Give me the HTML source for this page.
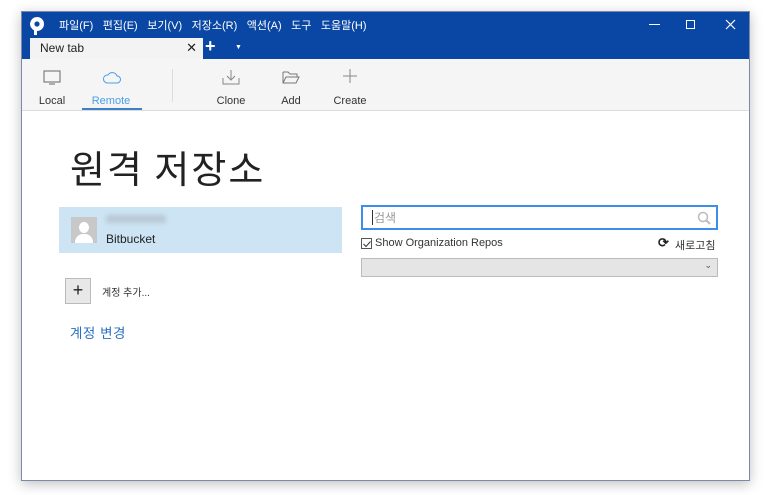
<!DOCTYPE html>
<html><head><meta charset="utf-8"><style>
*{margin:0;padding:0;box-sizing:border-box}
body{width:771px;height:495px;background:#fff;font-family:"Liberation Sans","Noto Sans CJK KR",sans-serif;position:relative;overflow:hidden}
.win{position:absolute;left:21px;top:11px;width:729px;height:470px;background:#fff;border:1px solid #7a8aa8;box-shadow:0 3px 12px rgba(0,0,0,.25)}
.title{position:absolute;left:0;top:0;width:727px;height:47px;background:#0a47a5}
.menu{position:absolute;top:5px;left:37px;color:#fff;font-size:11px;white-space:nowrap}
.menu span{margin-right:9.5px}
.tab{position:absolute;left:8px;top:26px;width:173px;height:21px;background:#f3f3f3;font-size:12px;color:#222;padding:3px 10px}
.ab{position:absolute;color:#fff}
.tool{position:absolute;top:47px;left:0;width:727px;height:52px;background:#f5f5f5;border-bottom:1px solid #ddd}
.ti{position:absolute;top:36px;font-size:11px;color:#333;text-align:center;width:60px}
.abs{position:absolute}
</style></head><body>
<div class="win">
<div class="title">
<svg class="abs" style="left:8px;top:5px" width="14" height="18" viewBox="0 0 14 18"><path d="M7 0a7 7 0 0 0-3 13.3V18h3v-4a7 7 0 0 0 0-14z" fill="#fff"/><circle cx="7" cy="7" r="2.6" fill="#0a47a5"/></svg>
<div class="menu"><span>파일(F)</span><span>편집(E)</span><span>보기(V)</span><span>저장소(R)</span><span>액션(A)</span><span>도구</span><span>도움말(H)</span></div>
<div class="abs" style="left:627px;top:12px;width:11px;height:1px;background:#fff"></div>
<div class="abs" style="left:664px;top:8px;width:9px;height:9px;border:1px solid #fff"></div>
<svg class="abs" style="left:703px;top:7px" width="11" height="11"><path d="M1 1l9 9M10 1l-9 9" stroke="#fff" stroke-width="1.2"/></svg>
<div class="tab">New tab<span style="position:absolute;right:6px;top:2px;font-size:13px">✕</span></div>
<div class="ab" style="left:183px;top:24px;font-size:18px;font-weight:bold">+</div>
<div class="ab" style="left:213px;top:32px;font-size:7px">▼</div>
</div>
<div class="tool">
<svg class="abs" style="left:21px;top:11px" width="18" height="15"><rect x="1" y="1" width="16" height="11" fill="none" stroke="#666"/><line x1="6" y1="14" x2="12" y2="14" stroke="#666"/></svg>
<div class="ti" style="left:0">Local</div>
<svg class="abs" style="left:80px;top:12px" width="19" height="13"><path d="M5 12h10a3.5 3.5 0 0 0 0-7 5 5 0 0 0-9-1A4 4 0 0 0 5 12z" fill="none" stroke="#4a9ee8"/></svg>
<div class="ti" style="left:59px;color:#4a9ee8">Remote</div>
<div class="abs" style="left:60px;top:49px;width:60px;height:2px;background:#3a7fc8"></div>
<div class="abs" style="left:150px;top:10px;width:1px;height:33px;background:#ddd"></div>
<svg class="abs" style="left:200px;top:10px" width="18" height="16"><path d="M9 1v10M5 7l4 4 4-4M1 9v6h16V9" fill="none" stroke="#888"/></svg>
<div class="ti" style="left:179px">Clone</div>
<svg class="abs" style="left:260px;top:11px" width="18" height="14"><path d="M1 2h5l2 2h7v3M1 2v11h13l3-6H4L1 13" fill="none" stroke="#777"/></svg>
<div class="ti" style="left:239px">Add</div>
<svg class="abs" style="left:321px;top:10px" width="14" height="14"><path d="M7 0v14M0 7h14" stroke="#888"/></svg>
<div class="ti" style="left:298px">Create</div>
</div>
<div class="abs" style="left:48px;top:136px;font-size:38px;color:#222;font-family:'Noto Sans CJK KR',sans-serif;line-height:1;letter-spacing:2px;white-space:nowrap">원격 저장소</div>
<div class="abs" style="left:37px;top:195px;width:283px;height:46px;background:#cce4f3"></div>
<div class="abs" style="left:49px;top:205px;width:26px;height:26px;background:#c8c8c8;overflow:hidden"><div class="abs" style="left:8px;top:5px;width:10px;height:11px;border-radius:50%;background:#fff"></div><div class="abs" style="left:4px;top:17px;width:18px;height:14px;border-radius:8px 8px 0 0;background:#fff"></div></div>
<div class="abs" style="left:84px;top:203px;width:60px;height:8px;background:#b9c8d6;border-radius:3px;filter:blur(2px)"></div>
<div class="abs" style="left:84px;top:220px;font-size:12px;color:#222">Bitbucket</div>
<div class="abs" style="left:43px;top:266px;width:26px;height:26px;background:#e8e8e8;border:1px solid #bbb;text-align:center;font-size:18px;line-height:23px;color:#222">+</div>
<div class="abs" style="left:80px;top:272px;font-size:10px;color:#333">계정 추가...</div>
<div class="abs" style="left:48px;top:310px;font-size:13.5px;color:#2a70c0;letter-spacing:0.5px">계정 변경</div>
<div class="abs" style="left:339px;top:193px;width:357px;height:25px;border:2px solid #3c8ee8;background:#fff"><div class="abs" style="left:9px;top:3px;width:1px;height:15px;background:#333"></div><div class="abs" style="left:11px;top:2px;font-size:12px;color:#999">검색</div>
<svg class="abs" style="left:334px;top:4px" width="14" height="14"><circle cx="6" cy="6" r="4.5" fill="none" stroke="#bbb" stroke-width="1.5"/><path d="M9 9l4 4" stroke="#bbb" stroke-width="2"/></svg></div>
<div class="abs" style="left:339px;top:226px;width:11px;height:11px;border:1px solid #555;background:#fff"><svg class="abs" style="left:0;top:0" width="10" height="10"><path d="M1.5 5l2.5 2.5 4.5-5" fill="none" stroke="#333"/></svg></div>
<div class="abs" style="left:353px;top:225px;font-size:11px;color:#333">Show Organization Repos</div>
<div class="abs" style="left:636px;top:223px;font-size:13px;font-weight:bold;color:#222">⟳</div>
<div class="abs" style="left:653px;top:225px;font-size:11px;color:#333">새로고침</div>
<div class="abs" style="left:339px;top:246px;width:357px;height:19px;background:#e5e5e5;border:1px solid #bbb"><div class="abs" style="right:5px;top:1px;font-size:9px;color:#555">⌄</div></div>
</div>
</body></html>
